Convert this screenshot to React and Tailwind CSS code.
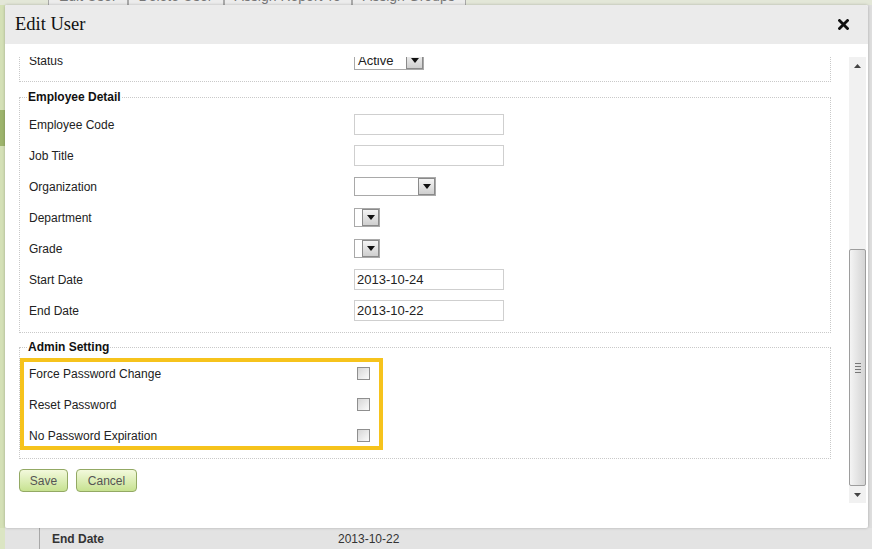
import React from 'react';

const font = { fontFamily: '"Liberation Sans", Arial, sans-serif' };

const SelectBox = ({ width, value }) => (
  <div className={`flex h-[19px] items-stretch border border-[#a9a9a9] bg-white ${width}`}>
    <div className="flex-1 overflow-hidden pl-[3px] text-[13px] leading-[17px] text-[#222]">{value}</div>
    <div className="flex w-[17px] items-center justify-center border border-[#8a8a8a] bg-gradient-to-b from-[#f4f4f4] to-[#cfcfcf]">
      <svg width="8" height="5" viewBox="0 0 8 5"><path d="M0 0h8L4 5z" fill="#111" /></svg>
    </div>
  </div>
);

const TextBox = ({ value }) => (
  <div className="h-[21px] w-[150px] border border-[#cfcfcf] bg-white pl-[2px] text-[13px] leading-[19px] text-[#222]">{value}</div>
);

const CheckBox = () => (
  <div className="ml-[3px] h-[13px] w-[13px] border border-[#8f8f8f] bg-gradient-to-br from-[#d6d6d6] to-[#fbfbfb]" />
);

const Row = ({ label, children }) => (
  <div className="flex h-[31px] items-center">
    <div className="w-[325px] text-[12px] text-[#222]">{label}</div>
    {children}
  </div>
);

const Fieldset = ({ legend, children, className = '' }) => (
  <fieldset className={`border border-dotted border-[#c9c9c9] px-[9px] ${className}`}>
    <legend className="ml-[-2px] px-[1px] text-[12px] font-bold leading-[14px] text-[#111]">{legend}</legend>
    {children}
  </fieldset>
);

const Button = ({ children, width }) => (
  <button className={`h-[23px] ${width} rounded-[4px] border border-[#93a964] bg-gradient-to-b from-[#f3f9dc] to-[#c7e290] text-[12px] text-[#555]`}>
    {children}
  </button>
);

const Scrollbar = () => (
  <div className="flex h-[446px] w-[17px] flex-col bg-[#f1f1f1]">
    <div className="flex h-[17px] items-center justify-center">
      <svg width="7" height="4" viewBox="0 0 7 4"><path d="M0 4h7L3.5 0z" fill="#444" /></svg>
    </div>
    <div className="h-[175px]" />
    <div className="flex h-[237px] items-center justify-center rounded-[2px] border border-[#9d9d9d] bg-gradient-to-r from-[#f4f4f4] to-[#d4d4d4]">
      <div className="flex flex-col gap-[2px]">
        <div className="h-px w-[6px] bg-[#777]" />
        <div className="h-px w-[6px] bg-[#777]" />
        <div className="h-px w-[6px] bg-[#777]" />
        <div className="h-px w-[6px] bg-[#777]" />
      </div>
    </div>
    <div className="flex h-[17px] items-center justify-center">
      <svg width="7" height="4" viewBox="0 0 7 4"><path d="M0 0h7L3.5 4z" fill="#444" /></svg>
    </div>
  </div>
);

export default function App() {
  const tabs = ['Edit User', 'Delete User', 'Assign Report To', 'Assign Groups'];
  return (
    <div className="relative flex h-[549px] w-[872px] flex-col overflow-hidden bg-[#e4e4e4]" style={font}>
      {/* page behind the dialog */}
      <div className="h-[5px] overflow-hidden bg-[#e3e7d8]">
        <div className="ml-[48px] mt-[-13px] flex">
          {tabs.map((t) => (
            <div key={t} className="border-x border-[#a9a9a9] bg-[#ececec] px-[10px] text-[14px] leading-[18px] text-[#777]">{t}</div>
          ))}
        </div>
      </div>
      <div className="flex flex-1">
        <div className="flex w-[5px] flex-col bg-[#d4e0b6]">
          <div className="h-[105px]" />
          <div className="h-[36px] bg-[#9db46c]" />
        </div>
        <div className="flex-1" />
        <div className="w-[4px] bg-[#dedede]" />
      </div>
      <div className="flex h-[21px] items-center bg-[#e3e3e3]">
        <div className="h-full w-[5px] bg-[#dbe5c3]" />
        <div className="ml-[34px] h-full w-px bg-[#a8a8a8]" />
        <div className="ml-[12px] w-[286px] text-[12px] font-bold text-[#333]">End Date</div>
        <div className="text-[12px] text-[#333]">2013-10-22</div>
      </div>

      {/* dialog */}
      <div className="absolute left-[5px] top-[5px] flex h-[523px] w-[863px] flex-col overflow-hidden rounded-[2px] bg-white shadow-[0_0_3px_rgba(0,0,0,0.25)]">
        <div className="flex h-[39px] items-center justify-between bg-[#ebebeb] pl-[10px] pr-[19px]">
          <div className="text-[18.5px] text-[#111]" style={{ fontFamily: '"Liberation Serif", Georgia, serif' }}>Edit User</div>
          <svg width="11" height="11" viewBox="0 0 11 11">
            <path d="M1.5 1.5l8 8M9.5 1.5l-8 8" stroke="#111" strokeWidth="2.8" strokeLinecap="square" />
          </svg>
        </div>
        <div className="flex pt-[13px]">
          <div className="ml-[14px] h-[445px] w-[812px] overflow-hidden">
            <div className="mt-[-12px]">
              <div className="border-x border-b border-dotted border-[#c9c9c9] px-[9px] pb-[5px]">
                <Row label="Status"><SelectBox width="w-[70px]" value="Active" /></Row>
              </div>
              <Fieldset legend="Employee Detail" className="mt-[8px] pb-[6px] pt-[5px]">
                <Row label="Employee Code"><TextBox /></Row>
                <Row label="Job Title"><TextBox /></Row>
                <Row label="Organization"><SelectBox width="w-[82px]" /></Row>
                <Row label="Department"><SelectBox width="w-[26px]" /></Row>
                <Row label="Grade"><SelectBox width="w-[26px]" /></Row>
                <Row label="Start Date"><TextBox value="2013-10-24" /></Row>
                <Row label="End Date"><TextBox value="2013-10-22" /></Row>
              </Fieldset>
              <Fieldset legend="Admin Setting" className="relative mt-[7px] pb-[7px] pt-[4px]">
                <Row label="Force Password Change"><CheckBox /></Row>
                <Row label="Reset Password"><CheckBox /></Row>
                <Row label="No Password Expiration"><CheckBox /></Row>
                <div className="absolute left-[0px] top-[4px] h-[92px] w-[363px] border-[4px] border-[#f6c31c]" />
              </Fieldset>
              <div className="mt-[10px] flex gap-[8px]">
                <Button width="w-[49px]">Save</Button>
                <Button width="w-[61px]">Cancel</Button>
              </div>
            </div>
          </div>
          <div className="ml-[18px]">
            <Scrollbar />
          </div>
        </div>
      </div>
    </div>
  );
}
